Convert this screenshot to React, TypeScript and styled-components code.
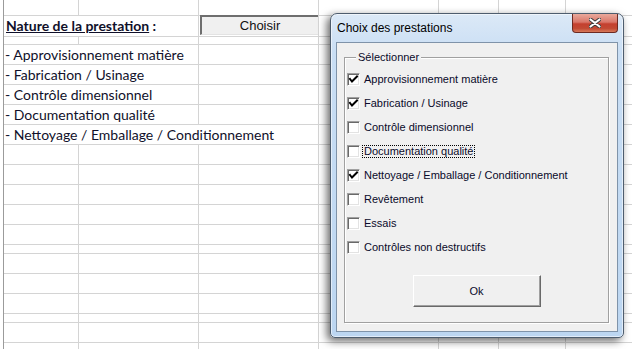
import React from "react";
import styled, { createGlobalStyle } from "styled-components";

const GRID_LINE = "#d4d4d4";
const COLUMNS = [75, 120, 120, 120, 60, 67, 120];
const ROWS = [16, 21, 8, 20, 20, 20, 20, 20, 20, 20, 20, 20, 20, 9, 20, 20, 20, 9, 20, 20];

const PRESTATIONS = [
  { label: "Approvisionnement matière", checked: true },
  { label: "Fabrication / Usinage", checked: true },
  { label: "Contrôle dimensionnel", checked: false },
  { label: "Documentation qualité", checked: false, focused: true },
  { label: "Nettoyage / Emballage / Conditionnement", checked: true },
  { label: "Revêtement", checked: false },
  { label: "Essais", checked: false },
  { label: "Contrôles non destructifs", checked: false },
];

type SheetCell = { span: number; content?: React.ReactNode };

export default function App() {
  const filled: Record<number, SheetCell[]> = {
    1: [
      {
        span: 2,
        content: (
          <Heading>
            <u>Nature de la prestation</u> :
          </Heading>
        ),
      },
      { span: 1, content: <ChooseButton>Choisir</ChooseButton> },
    ],
    3: [{ span: 2, content: "- Approvisionnement matière" }],
    4: [{ span: 2, content: "- Fabrication / Usinage" }],
    5: [{ span: 2, content: "- Contrôle dimensionnel" }],
    6: [{ span: 2, content: "- Documentation qualité" }],
    7: [{ span: 3, content: "- Nettoyage / Emballage / Conditionnement" }],
  };

  return (
    <>
      <GlobalStyle />
      <Screen>
        <Sheet>
          {ROWS.map((_, r) => {
            const cells = [...(filled[r] || [])];
            let used = cells.reduce((n, c) => n + c.span, 0);
            while (used < COLUMNS.length) {
              cells.push({ span: 1 });
              used++;
            }
            return cells.map((c, i) => (
              <Cell key={`${r}-${i}`} $span={c.span}>
                {c.content}
              </Cell>
            ));
          })}
        </Sheet>

        <Window>
          <TitleBar>
            <Title>Choix des prestations</Title>
            <CloseButton>
              <svg width="12" height="10" viewBox="0 0 12 10">
                <path d="M1.5 1.5 L10.5 8.5 M10.5 1.5 L1.5 8.5" stroke="#3b3b3b" strokeWidth="4" strokeLinecap="round" />
                <path d="M1.5 1.5 L10.5 8.5 M10.5 1.5 L1.5 8.5" stroke="#fff" strokeWidth="2.2" strokeLinecap="round" />
              </svg>
            </CloseButton>
          </TitleBar>
          <Client>
            <GroupBox>
              <Legend>Sélectionner</Legend>
              {PRESTATIONS.map((p) => (
                <CheckRow key={p.label}>
                  <CheckBox>
                    {p.checked && (
                      <svg width="11" height="11" viewBox="0 0 11 11">
                        <path d="M2 5 L4 7.5 L9 2.5" stroke="#000" strokeWidth="2" fill="none" strokeLinecap="square" />
                      </svg>
                    )}
                  </CheckBox>
                  <CheckLabel $focused={!!p.focused}>{p.label}</CheckLabel>
                </CheckRow>
              ))}
              <OkButton>Ok</OkButton>
            </GroupBox>
          </Client>
        </Window>
      </Screen>
    </>
  );
}

const GlobalStyle = createGlobalStyle`
  html, body {
    margin: 0;
    padding: 0;
    background: #fff;
  }
  body {
    width: 632px;
    height: 349px;
    overflow: hidden;
  }
`;

const Screen = styled.div`
  position: relative;
  width: 632px;
  height: 349px;
  overflow: hidden;
  background: #fff;
`;

const Sheet = styled.div`
  display: grid;
  grid-template-columns: ${COLUMNS.map((w) => `${w}px`).join(" ")};
  grid-template-rows: ${ROWS.map((h) => `${h}px`).join(" ")};
  margin-left: 3px;
  border-left: 1px solid #9b9b9b;
  font-family: Lato, "Liberation Sans", sans-serif;
  font-size: 14px;
  color: #10102a;
`;

const Cell = styled.div<{ $span: number }>`
  grid-column: span ${(p) => p.$span};
  box-sizing: border-box;
  border-right: 1px solid ${GRID_LINE};
  border-bottom: 1px solid ${GRID_LINE};
  display: flex;
  align-items: center;
  padding-left: 1px;
  white-space: nowrap;
  line-height: 18px;
`;

const Heading = styled.span`
  font-weight: bold;
  padding-left: 1px;
`;

const ChooseButton = styled.div`
  box-sizing: border-box;
  align-self: flex-start;
  margin: -1px 0 0 0;
  width: 120px;
  height: 20px;
  background: #f0f0f0;
  border-top: 2px solid #6e6e6e;
  border-left: 2px solid #6e6e6e;
  border-bottom: 1px solid #e3e3e3;
  font-family: "Liberation Sans", Arial, sans-serif;
  font-size: 13px;
  color: #111;
  display: flex;
  align-items: center;
  justify-content: center;
`;

const Window = styled.div`
  position: absolute;
  left: 330px;
  top: 13px;
  width: 294px;
  height: 325px;
  box-sizing: border-box;
  display: flex;
  flex-direction: column;
  padding: 0 5px 5px;
  border: 1px solid #4e5d6e;
  border-radius: 7px 7px 5px 5px;
  background: linear-gradient(180deg, #dce9f7 0%, #c9def4 12%, #bcd6f1 100%);
  box-shadow: -3px 3px 9px rgba(0, 0, 0, 0.6), inset 0 0 0 1px rgba(255, 255, 255, 0.55);
  font-family: "Liberation Sans", Arial, sans-serif;
`;

const TitleBar = styled.div`
  height: 28px;
  display: flex;
  justify-content: space-between;
  align-items: flex-start;
`;

const Title = styled.div`
  align-self: center;
  padding-left: 1px;
  font-size: 12px;
  color: #000;
`;

const CloseButton = styled.div`
  box-sizing: border-box;
  width: 46px;
  height: 19px;
  display: flex;
  align-items: center;
  justify-content: center;
  border: 1px solid #6d2a22;
  border-top: none;
  border-radius: 0 0 4px 4px;
  background: linear-gradient(180deg, #e9a99c 0%, #d9776a 45%, #c4402f 55%, #c24a34 80%, #d77a5a 100%);
`;

const Client = styled.div`
  flex: 1;
  box-sizing: border-box;
  border: 1px solid #7f93a9;
  background: #f0f0f0;
  padding: 14px 8px 8px 7px;
  display: flex;
`;

const GroupBox = styled.div`
  position: relative;
  flex: 1;
  box-sizing: border-box;
  border: 1px solid #a0a0a0;
  box-shadow: 1px 1px 0 #fff, inset 1px 1px 0 #fff;
  padding-top: 9px;
  display: flex;
  flex-direction: column;
  font-size: 11px;
  color: #0a0a2a;
`;

const Legend = styled.span`
  position: absolute;
  top: -7px;
  left: 11px;
  padding: 0 2px;
  line-height: 13px;
  background: #f0f0f0;
`;

const CheckRow = styled.div`
  height: 24px;
  display: flex;
  align-items: center;
  padding-left: 2px;
`;

const CheckBox = styled.span`
  box-sizing: border-box;
  width: 13px;
  height: 13px;
  display: flex;
  align-items: center;
  justify-content: center;
  background: #fff;
  border-top: 1px solid #a0a0a0;
  border-left: 1px solid #a0a0a0;
  border-right: 1px solid #fff;
  border-bottom: 1px solid #fff;
  box-shadow: inset 1px 1px 0 #696969, inset -1px -1px 0 #e3e3e3;
`;

const CheckLabel = styled.span<{ $focused: boolean }>`
  margin-left: 2px;
  padding: 0 1px;
  line-height: 11px;
  border: 1px dotted ${(p) => (p.$focused ? "#000" : "transparent")};
`;

const OkButton = styled.div`
  box-sizing: border-box;
  align-self: center;
  margin-top: 16px;
  width: 128px;
  height: 32px;
  display: flex;
  align-items: center;
  justify-content: center;
  background: #f0f0f0;
  border-top: 1px solid #fff;
  border-left: 1px solid #fff;
  border-right: 1px solid #696969;
  border-bottom: 1px solid #696969;
  box-shadow: inset -1px -1px 0 #a0a0a0, 0 0 0 0 #e3e3e3;
  font-size: 11px;
  color: #0a0a2a;
`;
